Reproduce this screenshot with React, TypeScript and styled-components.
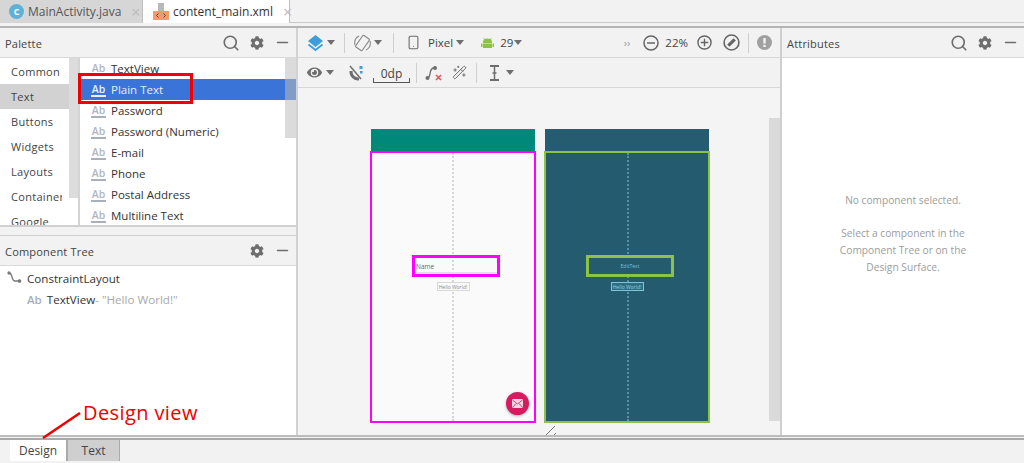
import { ReactNode } from "react";
import styled, { createGlobalStyle } from "styled-components";
import { FaCog, FaEye } from "react-icons/fa";
import { Search, Minus, Smartphone, Wand2 } from "lucide-react";

const Global = createGlobalStyle`
  html, body {
    margin: 0;
    padding: 0;
    background: #f2f2f2;
  }
  * {
    box-sizing: border-box;
  }
`;

const Page = styled.div`
  position: relative;
  width: 1024px;
  height: 463px;
  overflow: hidden;
  display: flex;
  flex-direction: column;
  background: #f2f2f2;
  color: #3a3a3a;
  font-family: "Open Sans", "Noto Sans", sans-serif;
  font-size: 12px;
`;

const EditorTabs = styled.div`
  height: 28px;
  flex: none;
  display: flex;
  background: #f2f2f2;
  border-bottom: 2px solid #b4b4b4;
  box-shadow: inset 0 -3px 0 #f2f2f2, inset 0 -4px 0 #c8c8c8;
`;

const EditorTab = styled.div<{ $active?: boolean }>`
  height: 23px;
  width: ${(p) => (p.$active ? "147px" : "143px")};
  padding-left: ${(p) => (p.$active ? "10px" : "9px")};
  display: flex;
  align-items: center;
  gap: 4px;
  font-size: 12px;
  color: ${(p) => (p.$active ? "#333" : "#555")};
  background: ${(p) => (p.$active ? "#fff" : "#d6d6d6")};
  border-right: 1px solid #bdbdbd;
`;

const TabClose = styled.span`
  color: #bbb;
  font-size: 16px;
  margin-left: 6px;
`;

const ClassBadge = styled.span`
  width: 15px;
  height: 15px;
  flex: none;
  border-radius: 50%;
  background: #5fb2d6;
  color: #fff;
  font-size: 9px;
  font-weight: 700;
  display: flex;
  align-items: center;
  justify-content: center;
`;

const XmlIconWrap = styled.span`
  width: 16px;
  height: 18px;
  flex: none;
  display: flex;
`;

const Body = styled.div`
  height: 407px;
  flex: none;
  display: flex;
`;

const LeftColumn = styled.div`
  width: 298px;
  flex: none;
  display: flex;
  flex-direction: column;
  border-right: 2px solid #d2d2d2;
`;

const PanelHeader = styled.div`
  height: 30px;
  flex: none;
  padding: 0 5px 0 5px;
  display: flex;
  align-items: center;
  gap: 10px;
  background: #f2f2f2;
  border-bottom: 1px solid #d8d8d8;
  font-size: 11px;
  letter-spacing: 0.2px;
  color: #444;
`;

const PanelTitle = styled.span`
  flex: 1;
  margin-top: 2px;
`;

const PaletteBody = styled.div`
  position: relative;
  height: 169px;
  flex: none;
  display: flex;
  background: #fff;
  border-bottom: 2px solid #d0d0d0;
`;

const Categories = styled.div`
  width: 80px;
  flex: none;
  position: relative;
  overflow: hidden;
  border-right: 2px solid #d4d4d4;
`;

const Category = styled.div<{ $active?: boolean }>`
  height: 25px;
  padding-left: 11px;
  display: flex;
  align-items: center;
  overflow: hidden;
  white-space: nowrap;
  font-size: 11px;
  letter-spacing: 0.3px;
  color: #444;
  width: 62px;
  background: ${(p) => (p.$active ? "#d2d2d2" : "transparent")};
  box-shadow: ${(p) => (p.$active ? "8px 0 0 #d2d2d2" : "none")};
`;

const CategoryList = styled.div`
  padding-top: 1px;
`;

const ScrollThumb = styled.div`
  position: absolute;
  top: 0;
  background: #dcdcdc;
`;

const CategoryThumb = styled(ScrollThumb)`
  right: 0;
  width: 9px;
  height: 140px;
`;

const ListThumb = styled(ScrollThumb)`
  right: 0;
  width: 11px;
  height: 80px;
  background: rgba(190, 190, 190, 0.55);
`;

const ItemList = styled.div`
  flex: 1;
  overflow: hidden;
`;

const Item = styled.div<{ $active?: boolean }>`
  height: 21px;
  padding-left: 11px;
  display: flex;
  align-items: center;
  gap: 5px;
  font-size: 11.5px;
  color: ${(p) => (p.$active ? "#e8eefa" : "#333")};
  background: ${(p) => (p.$active ? "#3b74d8" : "transparent")};
`;

const AbMark = styled.span<{ $active?: boolean }>`
  width: 15px;
  flex: none;
  font-size: 10.5px;
  font-weight: 600;
  line-height: 12px;
  text-align: center;
  color: ${(p) => (p.$active ? "#e8eefa" : "#b0b6be")};
  border-bottom: 2px solid ${(p) => (p.$active ? "#e8eefa" : "#a8b0ba")};
`;

const PaneGap = styled.div`
  height: 9px;
  flex: none;
  background: #f2f2f2;
  border-bottom: 1px solid #d0d0d0;
`;

const Tree = styled.div`
  flex: 1;
  background: #fff;
  padding-top: 2px;
  font-size: 11.6px;
  color: #333;
`;

const TreeRow = styled.div<{ $indent: number }>`
  height: 21px;
  padding-left: ${(p) => p.$indent}px;
  display: flex;
  align-items: center;
  gap: 5px;
`;

const TreeAb = styled.span`
  font-size: 11.5px;
  font-weight: 600;
  color: #a8aeb6;
`;

const Muted = styled.span`
  color: #a8a8a8;
  margin-left: -5px;
`;

const Center = styled.div`
  width: 484px;
  flex: none;
  display: flex;
  flex-direction: column;
  border-right: 2px solid #cfcfcf;
`;

const Toolbar = styled.div`
  height: 30px;
  flex: none;
  display: flex;
  align-items: center;
  padding-left: 9px;
  color: #6e6e6e;
  background: #f2f2f2;
  border-bottom: 1px solid #d8d8d8;
  font-size: 11.5px;
`;

const Divider = styled.span<{ $m: string }>`
  width: 1px;
  height: 20px;
  background: #cfcfcf;
  margin: ${(p) => p.$m};
`;

const Spring = styled.span`
  flex: 1;
`;

const Gap = styled.span<{ $w: number }>`
  flex: 0 0 ${(p) => p.$w}px;
`;

const Caret = styled.span<{ $m?: string }>`
  width: 0;
  height: 0;
  border-left: 4px solid transparent;
  border-right: 4px solid transparent;
  border-top: 5px solid #6e6e6e;
  margin: ${(p) => p.$m ?? "0"};
`;

const BarText = styled.span<{ $m?: string }>`
  color: #444;
  margin: ${(p) => p.$m ?? "0"};
`;

const Overflow = styled.span`
  color: #999;
  font-size: 11px;
  margin-right: 13px;
`;

const DpBox = styled.span`
  position: relative;
  width: 37px;
  height: 16px;
  margin: 2px 0 0 9px;
  display: flex;
  align-items: center;
  justify-content: center;
  font-size: 12px;
  color: #444;
  &::after {
    content: "";
    position: absolute;
    left: 0;
    right: 0;
    bottom: -1px;
    height: 4px;
    border: 1px solid #555;
    border-top: 0;
  }
`;

const Canvas = styled.div`
  position: relative;
  flex: 1;
  display: flex;
  gap: 8px;
  padding: 41px 0 0 72px;
  background: #f4f4f4;
`;

const CanvasThumb = styled.div`
  position: absolute;
  right: 0;
  top: 30px;
  width: 11px;
  height: 303px;
  background: #dadada;
`;

const Resize = styled.svg`
  position: absolute;
  left: 248px;
  bottom: 0;
`;

const Device = styled.div`
  width: 166px;
  flex: none;
`;

const DeviceBar = styled.div<{ $blueprint?: boolean }>`
  height: 22px;
  margin: 0 1px;
  background: ${(p) => (p.$blueprint ? "#255c70" : "#00897b")};
`;

const Frame = styled.div<{ $blueprint?: boolean }>`
  position: relative;
  height: 272px;
  padding-top: 102px;
  display: flex;
  flex-direction: column;
  align-items: center;
  background: ${(p) => (p.$blueprint ? "#245b6f" : "#fafafa")};
  border: 2px solid ${(p) => (p.$blueprint ? "#8bc34a" : "#ff00ff")};
`;

const CenterLine = styled.div<{ $blueprint?: boolean }>`
  position: absolute;
  left: ${(p) => (p.$blueprint ? "81px" : "80px")};
  top: 0;
  bottom: 0;
  border-left: 2px dotted ${(p) => (p.$blueprint ? "#4f93a6" : "#d6d6d6")};
`;

const Field = styled.div<{ $blueprint?: boolean }>`
  position: relative;
  width: 88px;
  height: 22px;
  padding: 0 1px;
  margin-left: 6px;
  display: flex;
  align-items: center;
  justify-content: ${(p) => (p.$blueprint ? "center" : "flex-start")};
  font-size: ${(p) => (p.$blueprint ? "5px" : "6.5px")};
  color: ${(p) => (p.$blueprint ? "#7fc3d6" : "#666")};
  background: ${(p) => (p.$blueprint ? "#245b6f" : "transparent")};
  border: 3px solid ${(p) => (p.$blueprint ? "#8bc34a" : "#ff00ff")};
  box-shadow: ${(p) => (p.$blueprint ? "none" : "inset 0 -2px 0 #e2e2e2")};
`;

const Label = styled.div<{ $blueprint?: boolean }>`
  position: relative;
  width: 33px;
  height: 9px;
  margin-top: 5px;
  display: flex;
  align-items: center;
  justify-content: center;
  white-space: nowrap;
  font-size: 5px;
  color: ${(p) => (p.$blueprint ? "#8fd0e2" : "#888")};
  background: ${(p) => (p.$blueprint ? "#2f6d82" : "#fafafa")};
  border: 1px solid ${(p) => (p.$blueprint ? "#7fc3d6" : "#d8d8d8")};
`;

const Fab = styled.div`
  position: absolute;
  right: 5px;
  bottom: 6px;
  width: 23px;
  height: 23px;
  border-radius: 50%;
  background: #d81b60;
  box-shadow: 0 1px 3px rgba(0, 0, 0, 0.3);
  display: flex;
  align-items: center;
  justify-content: center;
`;

const RightPanel = styled.div`
  flex: 1;
  display: flex;
  flex-direction: column;
`;

const PanelMessage = styled.div`
  flex: 1;
  padding: 134px 24px 0;
  background: #fff;
  text-align: center;
  color: #9c9c9c;
  font-size: 10.2px;
  line-height: 17px;
`;

const MessageGap = styled.p`
  margin: 0 0 16px;
`;

const MessageLine = styled.p`
  margin: 0;
`;

const BottomTabs = styled.div`
  flex: 1;
  display: flex;
  padding-left: 10px;
  background: #f2f2f2;
  border-top: 2px solid #bcbcbc;
  position: relative;
`;

const BottomRule = styled.div`
  position: absolute;
  left: 0;
  right: 0;
  top: 1px;
  height: 2px;
  background: #a8a8a8;
`;

const BottomTab = styled.div<{ $active?: boolean }>`
  position: relative;
  width: ${(p) => (p.$active ? "57px" : "53px")};
  height: 21px;
  margin-top: 3px;
  display: flex;
  align-items: center;
  justify-content: center;
  font-size: 12px;
  color: #444;
  background: ${(p) => (p.$active ? "#fff" : "#cfcfcf")};
  border-right: 1px solid #aaa;
  border-left: ${(p) => (p.$active ? "0" : "1px solid #aaa")};
`;

const RedBox = styled.div`
  position: absolute;
  left: 78px;
  top: 73px;
  width: 115px;
  height: 31px;
  border: 3px solid #f00000;
`;

const Callout = styled.div`
  position: absolute;
  left: 83px;
  top: 401px;
  color: #f00000;
  font-size: 20px;
  letter-spacing: 0.4px;
  line-height: 24px;
`;

const CalloutLine = styled.svg`
  position: absolute;
  left: 40px;
  top: 410px;
`;

const HeaderIcons = ({ search = true }: { search?: boolean }) => (
  <>
    {search && <Search size={18} strokeWidth={2.2} color="#6e6e6e" />}
    <FaCog size={14} color="#6e6e6e" />
    <Minus size={17} strokeWidth={2.2} color="#6e6e6e" />
  </>
);

const Xml = () => (
  <XmlIconWrap>
    <svg width="16" height="18" viewBox="0 0 16 18">
      <path d="M5 0h6v9H5z" fill="#b8b8b8" />
      <rect x="0" y="8" width="16" height="9" fill="#f59a6c" />
      <path d="M5.5 10.5 3.5 12.5l2 2M10.5 10.5l2 2-2 2" stroke="#7a3d20" fill="none" />
    </svg>
  </XmlIconWrap>
);

const Layers = () => (
  <svg width="17" height="18" viewBox="0 0 17 18">
    <path d="M8.5 1 16 7l-7.5 6L1 7z" fill="#3c9fdc" />
    <path d="M1.5 10.5 8.5 16l7-5.5" stroke="#3c9fdc" strokeWidth="1.8" fill="none" />
  </svg>
);

const RotateIcon = () => (
  <svg width="17" height="18" viewBox="0 0 17 18" fill="none" stroke="#8a8a8a" strokeWidth="1.1">
    <rect x="4.5" y="2" width="8" height="14" rx="1" transform="rotate(35 8.5 9)" />
    <path d="M1 11A8 8 0 0 1 5 2M16 7a8 8 0 0 1-4 9" />
  </svg>
);

const AndroidIcon = () => (
  <svg width="13" height="10" viewBox="0 0 13 10">
    <path d="M2.5 0l1.500 2M10.500 0 9 2" stroke="#8bc34a" strokeWidth="0.800" />
    <path d="M2 4a4.500 3.500 0 0 1 9 0v1H2z" fill="#8bc34a" />
    <rect x="2" y="5.500" width="9" height="4.500" fill="#8bc34a" />
    <rect x="0" y="5.500" width="1.500" height="3.500" fill="#8bc34a" />
    <rect x="11.500" y="5.500" width="1.500" height="3.500" fill="#8bc34a" />
  </svg>
);

const NoAutoConnect = () => (
  <svg width="15" height="16" viewBox="0 0 15 16" fill="none">
    <path d="M2 6a7.500 7.500 0 0 0 8 8" stroke="#6e6e6e" strokeWidth="3" />
    <path d="M1 1l11 13" stroke="#6e6e6e" strokeWidth="1.500" />
    <rect x="10.500" y="1" width="3" height="3" fill="#3c9fdc" />
    <rect x="11" y="6" width="2.500" height="2.500" fill="#3c9fdc" />
  </svg>
);

const ClearConstraints = () => (
  <svg width="18" height="16" viewBox="0 0 18 16" fill="none">
    <path d="M2 13c5 0 1-10 7-10" stroke="#6e6e6e" strokeWidth="1.3" />
    <circle cx="2.5" cy="13" r="2" fill="#6e6e6e" />
    <circle cx="10" cy="3" r="2" fill="#6e6e6e" />
    <path d="M11 10l5 5M16 10l-5 5" stroke="#e25563" strokeWidth="1.6" />
  </svg>
);

const TextBaseline = () => (
  <svg width="11" height="16" viewBox="0 0 11 16" fill="none" stroke="#6e6e6e">
    <path d="M1 1h9M1 15h9" strokeWidth="2" />
    <path d="M5.5 2v12" strokeWidth="1.5" />
    <path d="M3.500 8h4" strokeWidth="1.500" />
  </svg>
);

const CircleIcon = ({ size, children }: { size: number; children: ReactNode }) => (
  <svg width={size} height={size} viewBox="0 0 16 16" fill="none" stroke="#666" strokeWidth="1.5">
    <circle cx="8" cy="8" r="7" />
    {children}
  </svg>
);

const WarningIcon = () => (
  <svg width="15" height="15" viewBox="0 0 15 15">
    <circle cx="7.5" cy="7.5" r="7.5" fill="#a0a0a0" />
    <rect x="6.3" y="3" width="2.400" height="5.500" fill="#f2f2f2" />
    <rect x="6.3" y="9.800" width="2.400" height="2.200" fill="#f2f2f2" />
  </svg>
);

const ConstraintIcon = () => (
  <svg width="15" height="15" viewBox="0 0 15 15" fill="none" stroke="#7a7a7a" strokeWidth="1.3">
    <path d="M2 2c4 0 2 8 6 8h4" />
    <circle cx="2" cy="2" r="1" fill="#7a7a7a" />
    <circle cx="12.500" cy="10" r="1.200" fill="#7a7a7a" />
  </svg>
);

const Envelope = () => (
  <svg width="11" height="9" viewBox="0 0 11 9">
    <rect width="11" height="9" rx="1" fill="#f8d5e2" />
    <path d="M0.5 1 5.5 5l5-4M0.5 8.5l3.5-4M10.5 8.5 7 4.5" stroke="#d81b60" fill="none" strokeWidth="0.8" />
  </svg>
);

const categories = ["Common", "Text", "Buttons", "Widgets", "Layouts", "Containers", "Google"];
const items = ["TextView", "Plain Text", "Password", "Password (Numeric)", "E-mail", "Phone", "Postal Address", "Multiline Text"];

export default function App() {
  return (
    <Page>
      <Global />
      <EditorTabs>
        <EditorTab>
          <ClassBadge>C</ClassBadge>
          MainActivity.java
          <TabClose>×</TabClose>
        </EditorTab>
        <EditorTab $active>
          <Xml />
          content_main.xml
          <TabClose>×</TabClose>
        </EditorTab>
      </EditorTabs>

      <Body>
        <LeftColumn>
          <PanelHeader>
            <PanelTitle>Palette</PanelTitle>
            <HeaderIcons />
          </PanelHeader>
          <PaletteBody>
            <Categories>
              <CategoryThumb />
              <CategoryList>
                {categories.map((c) => (
                  <Category key={c} $active={c === "Text"}>
                    {c}
                  </Category>
                ))}
              </CategoryList>
            </Categories>
            <ItemList>
              {items.map((label) => (
                <Item key={label} $active={label === "Plain Text"}>
                  <AbMark $active={label === "Plain Text"}>Ab</AbMark>
                  {label}
                </Item>
              ))}
            </ItemList>
            <ListThumb />
          </PaletteBody>
          <PaneGap />
          <PanelHeader>
            <PanelTitle>Component Tree</PanelTitle>
            <HeaderIcons search={false} />
          </PanelHeader>
          <Tree>
            <TreeRow $indent={7}>
              <ConstraintIcon />
              ConstraintLayout
            </TreeRow>
            <TreeRow $indent={27}>
              <TreeAb>Ab</TreeAb>
              TextView
              <Muted>- "Hello World!"</Muted>
            </TreeRow>
          </Tree>
        </LeftColumn>

        <Center>
          <Toolbar>
            <Layers />
            <Caret $m="0 0 0 3px" />
            <Divider $m="0 9px 0 9px" />
            <RotateIcon />
            <Caret $m="0 0 0 3px" />
            <Divider $m="0 12px 0 11px" />
            <Smartphone size={15} strokeWidth={1.8} color="#6e6e6e" />
            <BarText $m="0 3px 0 7px">Pixel</BarText>
            <Caret $m="0 17px 0 0" />
            <AndroidIcon />
            <BarText $m="0 1px 0 6px">29</BarText>
            <Caret />
            <Spring />
            <Overflow>››</Overflow>
            <CircleIcon size={16}>
              <path d="M4 8h8" />
            </CircleIcon>
            <BarText $m="0 9px 0 6px">22%</BarText>
            <CircleIcon size={15}>
              <path d="M4 8h8M8 4v8" />
            </CircleIcon>
            <Gap $w={11} />
            <CircleIcon size={17}>
              <path d="M5 11l6-6" strokeWidth="3" />
            </CircleIcon>
            <Divider $m="0 8px 0 8px" />
            <WarningIcon />
            <Gap $w={8} />
          </Toolbar>
          <Toolbar>
            <FaEye size={15} color="#6e6e6e" />
            <Caret $m="0 0 0 4px" />
            <Gap $w={15} />
            <NoAutoConnect />
            <DpBox>0dp</DpBox>
            <Divider $m="0 8px 0 6px" />
            <ClearConstraints />
            <Gap $w={9} />
            <Wand2 size={15} strokeWidth={1.6} color="#6e6e6e" />
            <Divider $m="0 12px 0 9px" />
            <TextBaseline />
            <Caret $m="0 0 0 6px" />
          </Toolbar>
          <Canvas>
            <Device>
              <DeviceBar />
              <Frame>
                <CenterLine />
                <Field>Name</Field>
                <Label>Hello World!</Label>
                <Fab>
                  <Envelope />
                </Fab>
              </Frame>
            </Device>
            <Device>
              <DeviceBar $blueprint />
              <Frame $blueprint>
                <CenterLine $blueprint />
                <Field $blueprint>EditText</Field>
                <Label $blueprint>Hello World!</Label>
              </Frame>
            </Device>
            <CanvasThumb />
            <Resize width="11" height="10" viewBox="0 0 11 10" fill="none" stroke="#777">
              <path d="M0 10 9 1M8 10l2-2" />
            </Resize>
          </Canvas>
        </Center>

        <RightPanel>
          <PanelHeader>
            <PanelTitle>Attributes</PanelTitle>
            <HeaderIcons />
          </PanelHeader>
          <PanelMessage>
            <MessageGap>No component selected.</MessageGap>
            <MessageLine>Select a component in the</MessageLine>
            <MessageLine>Component Tree or on the</MessageLine>
            <MessageLine>Design Surface.</MessageLine>
          </PanelMessage>
        </RightPanel>
      </Body>

      <BottomTabs>
        <BottomRule />
        <BottomTab $active>Design</BottomTab>
        <BottomTab>Text</BottomTab>
      </BottomTabs>

      <RedBox />
      <CalloutLine width="44" height="30" viewBox="0 0 44 30">
        <path d="M3 28 40 3" stroke="#f00000" strokeWidth="2.5" />
      </CalloutLine>
      <Callout>Design view</Callout>
    </Page>
  );
}
